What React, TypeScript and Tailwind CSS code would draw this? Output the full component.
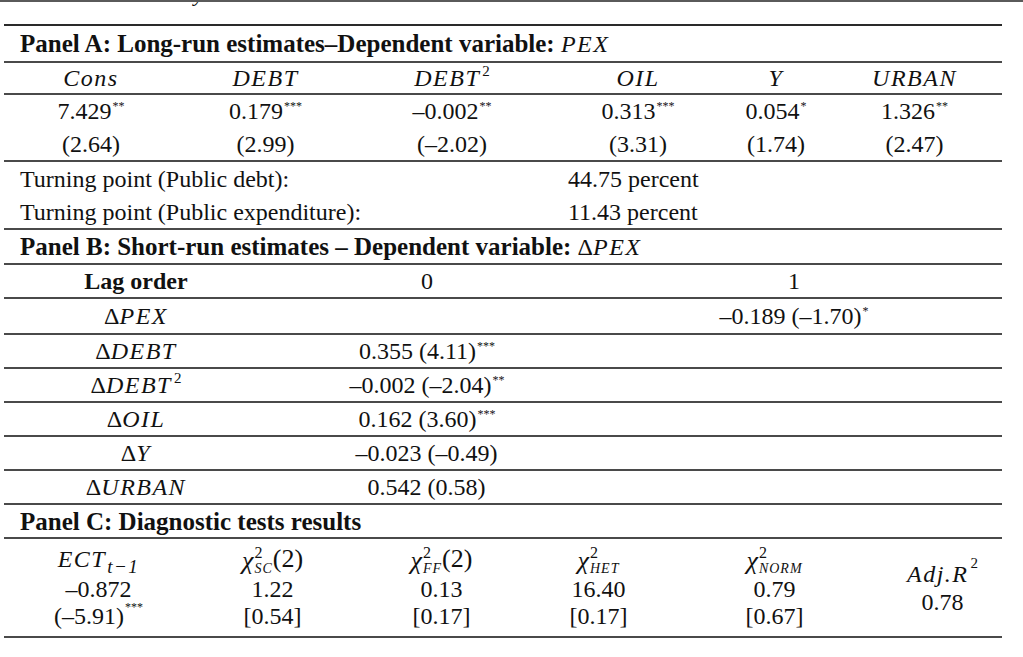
import React from 'react'

// small helpers for the math-ish bits of the table
function M({ children }: { children: React.ReactNode }) {
  return <span className="italic tracking-[1.5px]">{children}</span>
}

function Stars({ n }: { n: string }) {
  return <span className="relative -top-[9px] ml-[1px] text-[12px] leading-none">{n}</span>
}

function Sq() {
  return <span className="relative -top-[10px] ml-[2px] text-[15px] leading-none not-italic">2</span>
}

function Chi({ sub }: { sub: string }) {
  return (
    <span className="inline-flex items-center">
      <span className="italic text-[26px] relative top-[2px]">χ</span>
      <span className="inline-flex flex-col items-start ml-[1px] relative top-[1px]">
        <span className="text-[16px] leading-[17px]">2</span>
        <span className="italic text-[14px] leading-[15px] tracking-[1px]">{sub}</span>
      </span>
    </span>
  )
}

const line = 'border-b-2 border-[#4a4a4a]'

const longRun = [
  { head: <M>Cons</M>, val: '7.429', st: '**', t: '(2.64)' },
  { head: <M>DEBT</M>, val: '0.179', st: '***', t: '(2.99)' },
  { head: <><M>DEBT</M><Sq /></>, val: '–0.002', st: '**', t: '(–2.02)' },
  { head: <M>OIL</M>, val: '0.313', st: '***', t: '(3.31)' },
  { head: <M>Y</M>, val: '0.054', st: '*', t: '(1.74)' },
  { head: <M>URBAN</M>, val: '1.326', st: '**', t: '(2.47)' },
]

const shortRun = [
  { name: <>Δ<M>DEBT</M></>, v: '0.355 (4.11)', st: '***' },
  { name: <>Δ<M>DEBT</M><Sq /></>, v: '–0.002 (–2.04)', st: '**' },
  { name: <>Δ<M>OIL</M></>, v: '0.162 (3.60)', st: '***' },
  { name: <>Δ<M>Y</M></>, v: '–0.023 (–0.49)', st: '' },
  { name: <>Δ<M>URBAN</M></>, v: '0.542 (0.58)', st: '' },
]

const diag = [
  {
    head: (
      <>
        <M>ECT</M>
        <span className="relative top-[7px] ml-[1px] italic text-[19px] tracking-[1.5px] leading-none">t−1</span>
      </>
    ),
    v: '–0.872',
    p: <>(–5.91)<Stars n="***" /></>,
  },
  { head: <><Chi sub="SC" /><span className="text-[26px]">(2)</span></>, v: '1.22', p: '[0.54]' },
  { head: <><Chi sub="FF" /><span className="text-[26px]">(2)</span></>, v: '0.13', p: '[0.17]' },
  { head: <Chi sub="HET" />, v: '16.40', p: '[0.17]' },
  { head: <Chi sub="NORM" />, v: '0.79', p: '[0.67]' },
]

const colsA = 'grid grid-cols-[174px_175px_198px_174px_102px_175px]'
const colsB = 'grid grid-cols-[264px_318px_416px]'

export default function App() {
  return (
    <div className="w-[1023px] h-[657px] overflow-hidden bg-white text-[#111] font-['Liberation_Serif',serif] text-[24px] leading-none">
      <div className="relative h-[24px] overflow-hidden">
        <span className="absolute left-[194px] -top-[17px] italic text-[22px]">y</span>
        <div className="relative h-[2px] bg-[#5a5a5a]" />
      </div>

      <div className="ml-[4px] w-[998px] border-t-2 border-[#2a2a2a]">
        {/* Panel A */}
        <div className={`h-[37px] flex items-center pl-4 font-bold text-[25px] ${line}`}>
          Panel A: Long-run estimates–Dependent variable:&nbsp;<span className="font-normal text-[24px]"><M>PEX</M></span>
        </div>
        <div className={`${colsA} h-[32px] items-center text-center ${line}`}>
          {longRun.map((c, i) => <div key={i}>{c.head}</div>)}
        </div>
        <div className={line}>
          <div className={`${colsA} h-[32px] items-center text-center`}>
            {longRun.map((c, i) => <div key={i}>{c.val}<Stars n={c.st} /></div>)}
          </div>
          <div className={`${colsA} h-[33px] items-center text-center`}>
            {longRun.map((c, i) => <div key={i}>{c.t}</div>)}
          </div>
        </div>
        <div className={line}>
          <div className="grid grid-cols-[547px_1fr] h-[33px] items-center">
            <div className="pl-4">Turning point (Public debt):</div>
            <div className="pl-[17px]">44.75 percent</div>
          </div>
          <div className="grid grid-cols-[547px_1fr] h-[33px] items-center">
            <div className="pl-4">Turning point (Public expenditure):</div>
            <div className="pl-[17px]">11.43 percent</div>
          </div>
        </div>

        {/* Panel B */}
        <div className={`h-[35px] flex items-center pl-4 font-bold text-[25px] ${line}`}>
          Panel B: Short-run estimates – Dependent variable:&nbsp;<span className="font-normal text-[24px]">Δ<M>PEX</M></span>
        </div>
        <div className={`${colsB} h-[34px] items-center text-center ${line}`}>
          <div className="font-bold">Lag order</div>
          <div>0</div>
          <div>1</div>
        </div>
        <div className={`${colsB} h-[36px] items-center text-center ${line}`}>
          <div>Δ<M>PEX</M></div>
          <div />
          <div>–0.189 (–1.70)<Stars n="*" /></div>
        </div>
        {shortRun.map((r, i) => (
          <div key={i} className={`${colsB} h-[34px] items-center text-center ${line}`}>
            <div>{r.name}</div>
            <div>{r.v}<Stars n={r.st} /></div>
            <div />
          </div>
        ))}

        {/* Panel C */}
        <div className={`h-[34px] flex items-center pl-4 font-bold text-[25px] ${line}`}>
          Panel C: Diagnostic tests results
        </div>
        <div className={`grid grid-cols-[189px_159px_179px_135px_217px_119px] h-[99px] text-center ${line}`}>
          {diag.map((d, i) => (
            <div key={i} className="flex flex-col pt-[2px]">
              <div className="h-[36px] flex items-center justify-center">{d.head}</div>
              <div className="h-[23px] flex items-center justify-center">{d.v}</div>
              <div className="h-[31px] flex items-center justify-center">{d.p}</div>
            </div>
          ))}
          <div className="flex flex-col justify-center">
            <div className="h-[28px] flex items-center justify-center"><M>Adj.R</M><Sq /></div>
            <div className="h-[28px] flex items-center justify-center">0.78</div>
          </div>
        </div>
      </div>
    </div>
  )
}
